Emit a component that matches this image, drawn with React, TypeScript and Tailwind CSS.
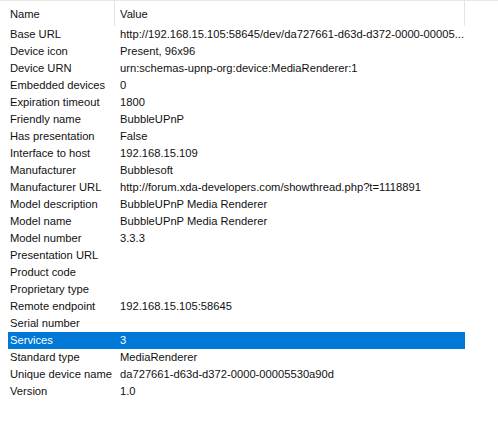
import React from 'react';

const rows: [string, string][] = [
  ['Base URL', 'http://192.168.15.105:58645/dev/da727661-d63d-d372-0000-00005...'],
  ['Device icon', 'Present, 96x96'],
  ['Device URN', 'urn:schemas-upnp-org:device:MediaRenderer:1'],
  ['Embedded devices', '0'],
  ['Expiration timeout', '1800'],
  ['Friendly name', 'BubbleUPnP'],
  ['Has presentation', 'False'],
  ['Interface to host', '192.168.15.109'],
  ['Manufacturer', 'Bubblesoft'],
  ['Manufacturer URL', 'http://forum.xda-developers.com/showthread.php?t=1118891'],
  ['Model description', 'BubbleUPnP Media Renderer'],
  ['Model name', 'BubbleUPnP Media Renderer'],
  ['Model number', '3.3.3'],
  ['Presentation URL', ''],
  ['Product code', ''],
  ['Proprietary type', ''],
  ['Remote endpoint', '192.168.15.105:58645'],
  ['Serial number', ''],
  ['Services', '3'],
  ['Standard type', 'MediaRenderer'],
  ['Unique device name', 'da727661-d63d-d372-0000-00005530a90d'],
  ['Version', '1.0'],
];

const App: React.FC = () => {
  return (
    <div
      className="w-[498px] h-[425px] bg-white text-[11.2px] text-[#111] overflow-hidden"
      style={{ fontFamily: '"Segoe UI", "Liberation Sans", sans-serif' }}
    >
      {/* column header */}
      <div className="flex h-[26px] border-t border-[#e8e8e8]">
        <div className="w-[115px] shrink-0 pl-[10px] pt-[5px] border-r border-[#e5e5e5]">Name</div>
        <div className="w-[350px] shrink-0 pl-[5px] pt-[5px] border-r border-[#e5e5e5]">Value</div>
      </div>
      <div className="ml-[8px] w-[457px]">
        {rows.map(([name, value]) => {
          const selected = name === 'Services';
          return (
            <div
              key={name}
              className={`flex h-[17px] leading-[17px] ${selected ? 'bg-[#0078d7] text-white' : ''}`}
            >
              <div className="w-[107px] shrink-0 pl-[2px] whitespace-nowrap">{name}</div>
              <div className="min-w-0 flex-1 pl-[5px] whitespace-nowrap">{value}</div>
            </div>
          );
        })}
      </div>
    </div>
  );
};

export default App;
